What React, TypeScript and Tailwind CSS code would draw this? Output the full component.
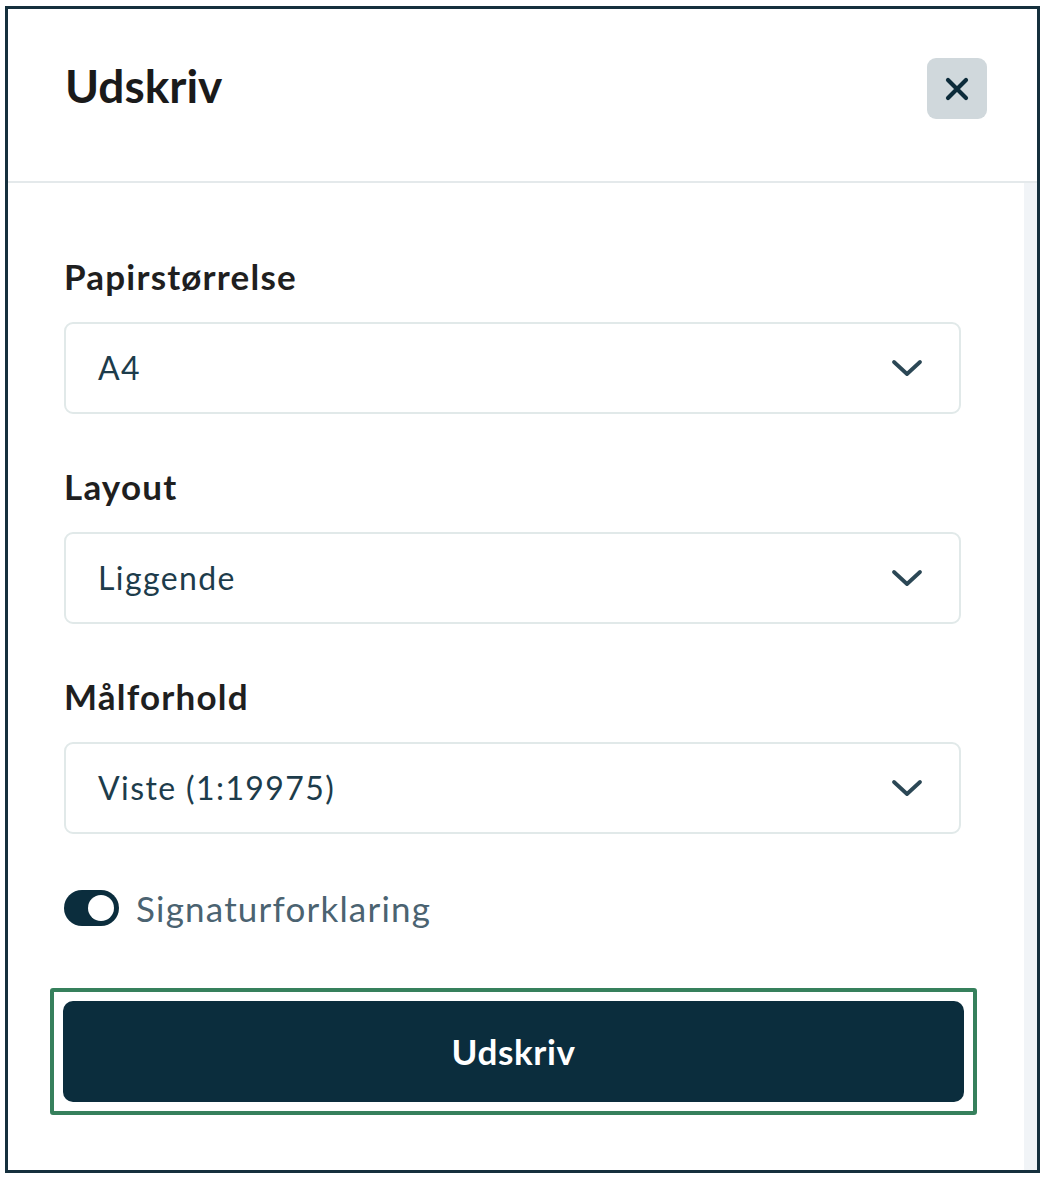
import React from 'react';

const font = { fontFamily: 'Lato, "Open Sans", sans-serif' };

const Chevron: React.FC = () => (
  <svg width="32" height="18" viewBox="0 0 32 18" fill="none">
    <path d="M3 3 L16 15 L29 3" stroke="#2b4755" strokeWidth="3.8" strokeLinecap="round" strokeLinejoin="round" />
  </svg>
);

interface SelectProps {
  label: string;
  value: string;
  first?: boolean;
}

const SelectField: React.FC<SelectProps> = ({ label, value, first }) => (
  <div className={first ? '' : 'mt-[52px]'}>
    <div className="text-[35px] leading-[40px] tracking-[1.2px] font-bold text-[#1f1f1f]">{label}</div>
    <div className="mt-[26px] h-[92px] w-[897px] border-2 border-[#e1e9e9] rounded-[9px] flex items-center justify-between pl-[32px] pr-[36px]">
      <span className="text-[32px] leading-[36px] tracking-[1.4px] text-[#1d3c4b]">{value}</span>
      <Chevron />
    </div>
  </div>
);

const App: React.FC = () => {
  return (
    <div className="w-[1045px] h-[1180px] bg-white pt-[6px] pl-[5px]" style={font}>
      <div className="w-[1035px] h-[1167px] border-[3px] border-[#15303d] flex flex-col">
        <div className="h-[174px] shrink-0 border-b-2 border-[#e4e9eb] flex items-start justify-between pt-[49px] pl-[57px] pr-[50px]">
          <h1 className="text-[46px] leading-[56px] font-bold text-[#1a1a1a]">Udskriv</h1>
          <button className="w-[60px] h-[61px] rounded-[9px] bg-[#d0d8dc] flex items-center justify-center">
            <svg width="24" height="24" viewBox="0 0 24 24" fill="none">
              <path d="M3 3 L21 21 M21 3 L3 21" stroke="#0c2b3a" strokeWidth="4.2" strokeLinecap="round" />
            </svg>
          </button>
        </div>
        <div className="flex-1 flex">
          <div className="flex-1 pl-[56px] pt-[73px]">
            <SelectField label="Papirstørrelse" value="A4" first />
            <SelectField label="Layout" value="Liggende" />
            <SelectField label="Målforhold" value="Viste (1:19975)" />
            <div className="mt-[54px] h-[40px] flex items-center gap-[17px]">
              <div className="w-[55px] h-[36px] rounded-full bg-[#0b2d3d] flex items-center justify-end pr-[5px]">
                <div className="w-[26px] h-[26px] rounded-full bg-white" />
              </div>
              <span className="text-[35px] leading-[40px] tracking-[1.2px] text-[#4b6371]">Signaturforklaring</span>
            </div>
            <div className="mt-[60px] -ml-[14px] w-[927px] border-4 border-[#36805c] rounded-[3px] p-[9px]">
              <button className="w-full h-[101px] rounded-[10px] bg-[#0b2d3d] text-white text-[35px] tracking-[0.6px] font-bold flex items-center justify-center">
                Udskriv
              </button>
            </div>
          </div>
          <div className="w-[13px] bg-[#f1f4f7]" />
        </div>
      </div>
    </div>
  );
};

export default App;
